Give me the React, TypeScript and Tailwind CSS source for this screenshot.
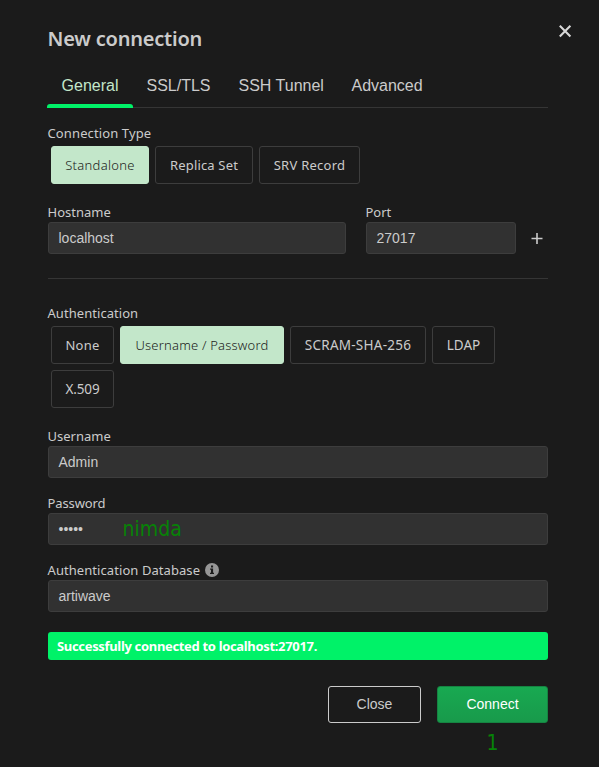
import React from 'react';

const ui = "font-['Noto_Sans','Open_Sans',sans-serif]";
const arial = "font-['Liberation_Sans',Arial,sans-serif]";
const note = "font-['DejaVu_Sans_Condensed','DejaVu_Sans',sans-serif]";

function Txt({ children, className = '' }: { children: React.ReactNode; className?: string }) {
  return <span className={`whitespace-nowrap ${className}`}>{children}</span>;
}

function Label({ children, className = '' }: { children: React.ReactNode; className?: string }) {
  return (
    <div className={`-ml-[0.5px] flex h-5 items-center text-[13px] leading-5 ${ui} ${className}`}>{children}</div>
  );
}

function Choice({ text, width, active = false, type = 'text-[13px]' }: { text: string; width: string; active?: boolean; type?: string }) {
  return (
    <button
      className={`flex h-[38px] shrink-0 items-center justify-center rounded-[3px] border pt-px ${ui} ${width} ${type} ${
        active ? 'border-[#c3e7ca] bg-[#c3e7ca] font-light text-[#1b1b1b]' : 'border-[#3d3d3d] text-[#cbcbcb]'
      }`}
    >
      <Txt>{text}</Txt>
    </button>
  );
}

function Field({ children, width = 'w-full' }: { children: React.ReactNode; width?: string }) {
  return (
    <div
      className={`flex h-8 items-center rounded-[3px] border border-[#3d3d3d] bg-[#313131] px-[9.5px] text-sm text-[#cbcbcb] ${arial} ${width}`}
    >
      {children}
    </div>
  );
}

export default function App() {
  return (
    <div className={`relative h-[767px] w-[599px] overflow-hidden bg-[#1b1b1b] pl-12 pr-[51px] text-[#cbcbcb] ${ui}`}>
      <button className="absolute left-[558px] top-6 text-[#d8d8d8]" aria-label="Dismiss">
        <svg width="14" height="14" viewBox="0 0 14 14" stroke="currentColor" strokeWidth="2.1">
          <path d="M1.8 1.8 12.4 12.4M12.4 1.8 1.8 12.4" />
        </svg>
      </button>

      <h1 className="flex h-[76px] items-center pt-0.5 text-[20px] font-semibold">
        <Txt className="-ml-[0.5px] tracking-[-0.2px]">New connection</Txt>
      </h1>

      <div className={`-ml-px flex h-8 border-b border-[#353535] text-base ${arial}`}>
        <div className="relative flex h-8 w-[86px] justify-center text-[#c3e7ca]">
          <Txt className="-mt-0.5">General</Txt>
          <span className="absolute bottom-0 left-0 h-1 w-full rounded-t-[3px] bg-[#00f268]" />
        </div>
        <Txt className="-mt-0.5 ml-[13.5px] w-[92px]">SSL/TLS</Txt>
        <Txt className="-mt-0.5 w-[113px]">SSH Tunnel</Txt>
        <Txt className="-mt-0.5">Advanced</Txt>
      </div>

      <Label className="mt-[15px]"><Txt className="tracking-[0.12px]">Connection Type</Txt></Label>
      <div className="mt-[3px] flex gap-1.5 pl-[3px]">
        <Choice text="Standalone" width="w-[98px]" type="text-[13px] tracking-[0.3px]" active />
        <Choice text="Replica Set" width="w-[98px]" type="text-[13px] tracking-[0.17px]" />
        <Choice text="SRV Record" width="w-[101px]" type="text-[13px] tracking-[0.25px]" />
      </div>

      <div className="mt-[18px] flex">
        <div className="w-[318px]">
          <Label><Txt>Hostname</Txt></Label>
          <Field width="w-[298px]">localhost</Field>
        </div>
        <div className="w-[150px]">
          <Label><Txt>Port</Txt></Label>
          <Field>27017</Field>
        </div>
        <div className="ml-[15px] pt-[31px]">
          <svg width="12" height="12" viewBox="0 0 12 12" stroke="#cbcbcb" strokeWidth="1.6">
            <path d="M6 0v11M.5 5.5h11" />
          </svg>
        </div>
      </div>

      <div className="mt-6 h-px bg-[#353535]" />

      <Label className="mt-6"><Txt className="tracking-[0.05px]">Authentication</Txt></Label>
      <div className="mt-[3px] flex flex-wrap gap-1.5 pl-[3px]">
        <Choice text="None" width="w-[63px]" type="text-[13px] tracking-[0.25px]" />
        <Choice text="Username / Password" width="w-[164px]" type="text-[13px] tracking-[0.2px]" active />
        <Choice text="SCRAM-SHA-256" width="w-[136px]" type="text-[13.5px] tracking-[0.25px]" />
        <Choice text="LDAP" width="w-[63px]" type="text-[13.5px]" />
        <Choice text="X.509" width="w-[63px]" type="text-[13.5px] tracking-[-0.1px]" />
      </div>

      <Label className="mt-[18px]"><Txt>Username</Txt></Label>
      <Field>Admin</Field>

      <Label className="mt-[15px]"><Txt className="tracking-[-0.1px]">Password</Txt></Label>
      <Field>
        <Txt className="w-16">•••••</Txt>
        <Txt className={`text-[21px] leading-none text-[#078207] ${note}`}>nimda</Txt>
      </Field>

      <Label className="mt-[15px]">
        <Txt className="tracking-[0.07px]">Authentication Database</Txt>
        <svg className="ml-[4.5px]" width="14" height="14" viewBox="0 0 14 14">
          <circle cx="7" cy="7" r="7" fill="#969696" />
          <path fill="#1b1b1b" d="M6 2.6h2.1v2H6zM5.1 5.5h3v4.2H9V11H5V9.700h1V6.800h-.9z" />
        </svg>
      </Label>
      <Field>artiwave</Field>

      <div className="mt-5 flex h-7 items-center rounded-[3px] bg-[#00f268] pl-[9px] pt-px text-[13px] font-bold text-white">
        <Txt className="tracking-[-0.33px]">Successfully connected to localhost:27017.</Txt>
      </div>

      <div className={`mt-[26px] flex justify-end gap-4 text-sm ${arial}`}>
        <button className="flex h-[37px] w-[93px] items-center justify-center rounded-[3px] border border-[#cbcbcb] pb-px">
          <Txt>Close</Txt>
        </button>
        <button className="flex h-[37px] w-[111px] items-center justify-center rounded-[3px] border border-[#168442] bg-gradient-to-b from-[#18a951] to-[#189a4b] pb-px text-white">
          <Txt>Connect</Txt>
        </button>
      </div>
      <div className={`ml-auto mt-2 flex h-6 w-[111px] items-center justify-center text-[21px] leading-6 text-[#078207] ${note}`}>1</div>
    </div>
  );
}
